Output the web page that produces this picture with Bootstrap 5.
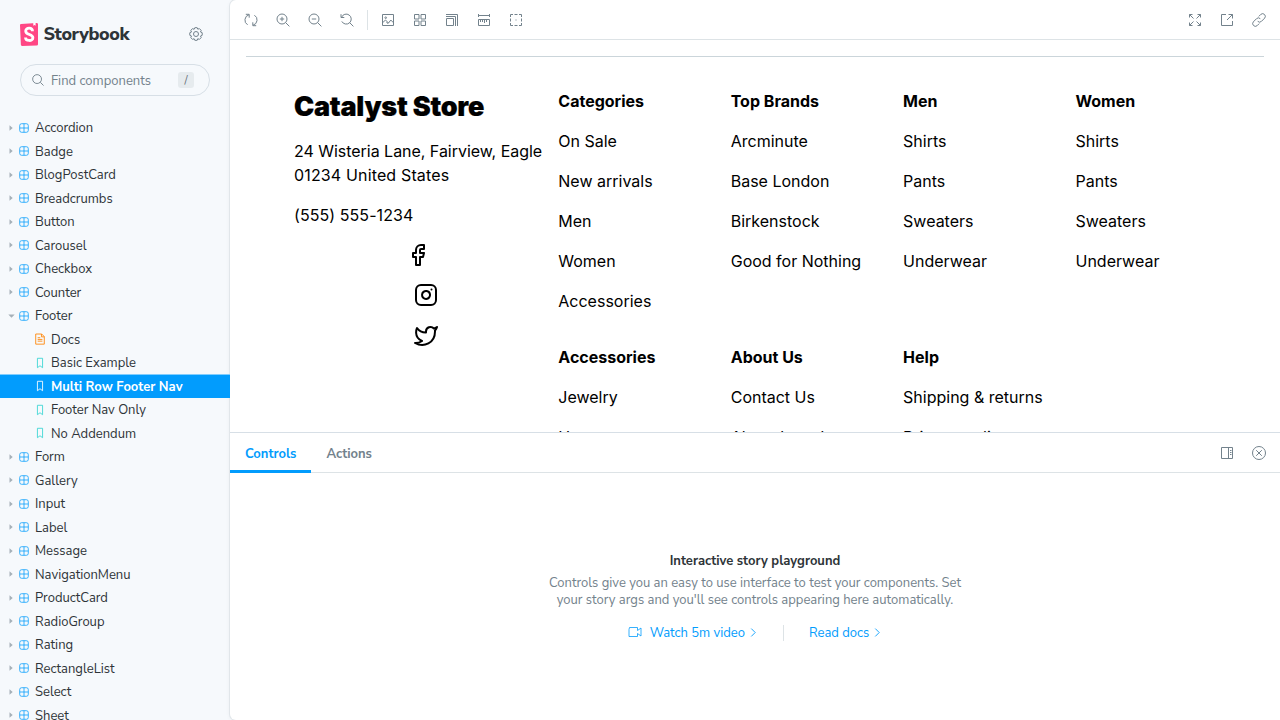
<!DOCTYPE html>
<html lang="en">
<head>
<meta charset="utf-8">
<title>Storybook</title>
<meta name="viewport" content="width=device-width, initial-scale=1">
<link href="https://cdn.jsdelivr.net/npm/bootstrap@5.3.0/dist/css/bootstrap.min.css" rel="stylesheet">
<style>
body{height:720px;background:#f6f9fc;color:#2e3438;font-family:"Nunito Sans","Open Sans",sans-serif;font-size:13px;line-height:18px;overflow:hidden}
svg{display:block;fill:none;stroke:currentColor;flex:none}
.side{width:230px;flex:none}
.brand{height:28px;margin:20px 20px 0}
.logo{stroke:none}
.brand-name{font-size:18px;font-weight:800;letter-spacing:-.36px;margin-left:4.500px}
.gear{color:#73828c;margin-right:7px}
.search{height:32px;margin:16px 20px 20px;border:1px solid #d7dfe6;border-radius:16px;color:#73828c;padding:0 15px 0 11px}
.search-text{margin-left:7px;padding-top:2px}
.key{width:16px;height:16px;border-radius:3px;background:#e6ebee;color:#5c6870;font-size:11px;line-height:17px}
.tree-row{height:23.5px;padding-left:7px;line-height:23.5px;white-space:nowrap}
.tree-row .arrow{width:8px;display:flex;justify-content:center;color:#a5b0b8;margin-right:3px}
.tree-row .kind{width:12px;height:12px;color:#029cfd;margin-right:5px}
.tree-row .label{padding-top:1px;height:23.5px}
.tree-row.leaf{padding-left:34px}
.tree-row.leaf .kind{color:#37d5d3}
.tree-row.leaf .doc{color:#ff8300}
.tree-row.on{background:#029cfd;box-shadow:0 -1px 0 #81cdfd;color:#fff;font-weight:700;position:relative;z-index:1}
.tree-row.on .kind{color:#fff}
.main{background:#fff;border-radius:6px 0 0 6px;box-shadow:0 0 0 1px #e1e6ea,0 1px 5px rgba(0,0,0,.06);color:#73828c;min-width:0}
.bar{height:40px;flex:none;border-bottom:1px solid #dde3e6;padding:0 14px;gap:18px}
.sep{width:1px;height:20px;background:#dde3e6;margin:0 -5px 0 -5px}
.canvas{height:392px;flex:none;overflow:hidden;color:#000;font:400 16px/24px Inter,sans-serif;padding:16px 16px 0}
.store{border-top:1px solid #cbd5da;padding:32px 0 0 48px;grid-template-columns:264.3px repeat(4,172.4px);display:grid;white-space:nowrap}
.store h1{font-size:27px;line-height:32px;font-weight:900;letter-spacing:-.25px;margin:2px 0 16px;-webkit-text-stroke:.2px #000}
.street{letter-spacing:-.03px}
.city{letter-spacing:.15px}
.phone{letter-spacing:.07px}
.social{width:248px;gap:16px}
.social svg{stroke-width:2;stroke-linecap:round;stroke-linejoin:round}
.social .nudge{margin-left:16px}
.social .nudge:last-child{margin-top:.6px}
.links{display:grid;grid-template-columns:repeat(4,172.4px);grid-column:2/6;row-gap:32px}
.links div>*{display:block;margin-bottom:16px}
.links div>*:last-child{margin-bottom:0}
.tabs{height:41px;border-top:1px solid #d7dfe6;border-bottom:1px solid #dde3e6;flex:none;padding-right:14px;gap:0}
.tab-item{height:40px;line-height:42px;padding:0 15px;font-weight:700;border-bottom:3px solid transparent}
.tab-item.on{color:#029cfd;border-color:#029cfd}
.close-panel{margin-left:18px}
.empty{padding-top:79px;line-height:17.3px}
.empty h2{font-size:13px;line-height:18px;font-weight:700;color:#2e3438;margin:0 0 5px}
.act{color:#029cfd;height:16px;margin-top:15px}
.act .txt{padding-top:1.400px}
.act svg{stroke-width:.8}
.act .go{margin:0 0 0 4px}
.act-sep{width:1px;height:16px;background:#dde3e6;margin:0 25px}
</style>
</head>
<body class="d-flex">
<svg width="0" height="0" class="position-absolute">
<symbol id="component" viewBox="0 0 14 14"><g stroke-width=".9"><rect x="2" y="2" width="10" height="10" rx="2.200"/><path d="M7 2v10M2 7h10"/></g></symbol>
<symbol id="story" viewBox="0 0 14 14"><path d="M4 1.500h6v11L7 10.200l-3 2.300z"/></symbol>
<symbol id="doc" viewBox="0 0 14 14"><path d="M2 1.200h7l3 3v8.800h-10zM8.700 1.200v3.300h3.300M4.300 5.500h3M4.300 7.500h5.500M4.300 9.500h5.500"/></symbol>
<symbol id="chev" viewBox="0 0 8 8"><path d="M2 .5 5.500 4 2 7.500"/></symbol>
</svg>
<aside class="side">
 <div class="brand d-flex align-items-center">
  <svg class="logo" width="19" height="23" viewBox="0 0 19 23"><path fill="#ff4785" d="M.9 22.100 0 2.200Q0 1.200 1 1.100L16.600 0q1.400 0 1.400 1.300v20q0 1.200-1.300 1.200L2 22.900q-1 0-1.100-.8z"/><path fill="#fff" d="M13.300 0 15.600 0v2.800l-1.100-.8-1.200.8z"/><path stroke="#fff" stroke-width="2.800" d="M12.500 8.300c0-4.200-6.800-4-6.800-.4 0 4.500 7.200 2.700 7.200 6.800 0 4-7.400 3.500-7.400-.3"/></svg>
  <span class="brand-name">Storybook</span>
  <svg class="gear ms-auto" width="14" height="14" viewBox="0 0 14 14"><circle cx="7" cy="7" r="2.500"/><path d="M5.800.7h2.400l.6 1.500 1.600-.6 1.800 1.800-.7 1.600 1.700.7v2.600l-1.700.7.7 1.600-1.800 1.800-1.600-.7-.6 1.600H5.800l-.7-1.600-1.600.7-1.700-1.800.7-1.600L.8 8.300V5.700L2.500 5l-.7-1.600 1.700-1.800 1.600.7z" stroke-linejoin="round"/></svg>
 </div>
 <div class="search d-flex align-items-center"><svg width="12" height="12" viewBox="0 0 13 13"><circle cx="5.500" cy="5.500" r="4.800"/><path d="m9 9 3.500 3.500"/></svg><span class="search-text">Find components</span><span class="key ms-auto text-center">/</span></div>
 <nav id="tree"></nav>
</aside>
<main class="main flex-grow-1 d-flex flex-column">
 <div class="bar d-flex align-items-center">
  <svg width="14" height="14" viewBox="0 0 14 14"><path d="M4.900 1.800A5.500 5.500 0 0 0 3.600 11.800M1.800 1.300h3.400v3.400M9.100 12.200A5.500 5.500 0 0 0 10.400 2.200M12.200 12.700H8.800V9.300"/></svg>
  <svg width="14" height="14" viewBox="0 0 14 14"><circle cx="6" cy="6" r="5"/><path d="m9.600 9.600 3.800 3.800M6 3.800v4.400M3.800 6h4.400"/></svg>
  <svg width="14" height="14" viewBox="0 0 14 14"><circle cx="6" cy="6" r="5"/><path d="m9.600 9.600 3.800 3.800M3.800 6h4.400"/></svg>
  <svg width="14" height="14" viewBox="0 0 14 14"><path d="M1.600 4.200a5 5 0 1 1 .2 4.200M1 1.200v3.300h3.300M9.600 9.600l3.800 3.800"/></svg>
  <span class="sep"></span>
  <svg width="14" height="14" viewBox="0 0 14 14"><path d="M1.500 1.500h11v11h-11zM1.800 9.500 4.500 7l3 3 2.300-3 2.700 2.800M5.500 9l1.800 2"/><circle cx="4.700" cy="4.700" r=".8"/></svg>
  <svg width="14" height="14" viewBox="0 0 14 14"><path d="M1.500 1.500h4.500v4.500h-4.500zM8 1.500h4.500v4.500h-4.500zM1.500 8h4.500v4.500h-4.500zM8 8h4.500v4.500h-4.500z"/></svg>
  <svg width="14" height="14" viewBox="0 0 14 14"><path d="M1.500 5.500h7v7h-7zM1 3.500h9.500V13M1 1.500h11.500V13"/></svg>
  <svg width="14" height="14" viewBox="0 0 14 14"><path d="M1.500 1v3M12.500 1v3M1.500 2.500h11M1.500 6.500h11v6h-11zM3.500 7v2M5.500 7v2M7.500 7v3M9.500 7v2"/></svg>
  <svg width="14" height="14" viewBox="0 0 14 14"><path d="M1.500 4V1.500H4M10 1.500h2.500V4M12.500 10v2.500H10M4 12.500H1.500V10M5.500 1.500h3M5.500 12.500h3M1.500 5.500v3M12.500 5.500v3M6.500 7h1"/></svg>
  <svg class="ms-auto" width="14" height="14" viewBox="0 0 14 14"><path d="M1.500 4.500v-3h3M9.500 1.500h3v3M12.500 9.500v3h-3M4.500 12.500h-3v-3M1.500 1.500 5.500 5.500M12.500 1.500l-4 4M12.500 12.500l-4-4M1.500 12.500l4-4"/></svg>
  <svg width="14" height="14" viewBox="0 0 14 14"><path d="M6 1.500H1.500v11h11V8M8.500 1.500h4v4M12.500 1.500 7 7"/></svg>
  <svg width="14" height="14" viewBox="0 0 14 14"><path d="M6.800 3.400 8.900 1.300a2.700 2.700 0 0 1 3.800 3.800L9.500 8.300a2.700 2.700 0 0 1-3.800 0M7.200 10.600l-2.100 2.100a2.700 2.700 0 0 1-3.800-3.800l3.200-3.200a2.700 2.700 0 0 1 3.800 0"/></svg>
 </div>
 <section class="canvas"><div class="store">
  <div><h1>Catalyst Store</h1><div class="street">24 Wisteria Lane, Fairview, Eagle</div><div class="city">01234 United States</div><div class="phone mt-3">(555) 555-1234</div>
   <div class="social d-flex flex-column align-items-center mt-3">
    <svg width="24" height="24" viewBox="0 0 24 24"><path d="M18 2h-3a5 5 0 0 0-5 5v3H7v4h3v8h4v-8h3l1-4h-4V7a1 1 0 0 1 1-1h3z"/></svg>
    <svg class="nudge" width="24" height="24" viewBox="0 0 24 24"><rect x="2" y="2" width="20" height="20" rx="5"/><path d="M16 11.370A4 4 0 1 1 12.630 8 4 4 0 0 1 16 11.370zM17.500 6.500h.01"/></svg>
    <svg class="nudge" width="24" height="24" viewBox="0 0 24 24"><path d="M23 3a10.900 10.900 0 0 1-3.140 1.530 4.480 4.480 0 0 0-7.860 3v1A10.660 10.660 0 0 1 3 4s-4 9 5 13a11.640 11.640 0 0 1-7 2c9 5 20 0 20-11.500a4.500 4.500 0 0 0-.08-.83A7.720 7.720 0 0 0 23 3z"/></svg>
   </div></div>
  <div class="links">
   <div><b>Categories</b><span>On Sale</span><span>New arrivals</span><span>Men</span><span>Women</span><span>Accessories</span></div>
   <div><b>Top Brands</b><span>Arcminute</span><span>Base London</span><span>Birkenstock</span><span>Good for Nothing</span></div>
   <div><b>Men</b><span>Shirts</span><span>Pants</span><span>Sweaters</span><span>Underwear</span></div>
   <div><b>Women</b><span>Shirts</span><span>Pants</span><span>Sweaters</span><span>Underwear</span></div>
   <div><b>Accessories</b><span>Jewelry</span><span>Homeware</span></div>
   <div><b>About Us</b><span>Contact Us</span><span>About brand</span></div>
   <div><b>Help</b><span>Shipping &amp; returns</span><span>Privacy policy</span></div>
  </div>
 </div></section>
 <div class="tabs d-flex align-items-center">
  <span class="tab-item on">Controls</span><span class="tab-item">Actions</span>
  <svg class="ms-auto" width="14" height="14" viewBox="0 0 14 14"><path d="M1.500 1.500h11v11h-11zM8.500 1.500v11M10 4.500h1.500M10 6.500h1.500M10 8.500h1.500"/></svg>
  <svg class="close-panel" width="14" height="14" viewBox="0 0 14 14"><circle cx="7" cy="7" r="6.500"/><path d="m4.200 4.200 5.600 5.600M9.800 4.200 4.200 9.800"/></svg>
 </div>
 <section class="empty text-center">
  <h2>Interactive story playground</h2>
  <div>Controls give you an easy to use interface to test your components. Set<br>your story args and you'll see controls appearing here automatically.</div>
  <div class="act d-flex justify-content-center align-items-center"><svg width="14" height="14" viewBox="0 0 14 14"><path d="M1.500 1.500h8v3l3.500-2.500v8l-3.500-2.500v3h-8.500V3.500z"/></svg><span class="txt ms-2">Watch 5m video</span><svg class="go" width="9" height="9"><use href="#chev"/></svg><span class="act-sep"></span><span class="txt">Read docs</span><svg class="go" width="9" height="9"><use href="#chev"/></svg></div>
 </section>
</main>
<script src="https://cdn.jsdelivr.net/npm/bootstrap@5.3.0/dist/js/bootstrap.bundle.min.js"></script>
<script>
const closed='<svg width="4" height="6" viewBox="0 0 4 6"><path fill="currentColor" stroke="none" d="M.5.300 3.700 3 .5 5.700z"/></svg>';
const open='<svg width="7" height="4" viewBox="0 0 7 4"><path fill="currentColor" stroke="none" d="M.3.500h6.400L3.500 3.700z"/></svg>';
const icon=(n,c='')=>`<svg class="kind ${c}" width="12" height="12"><use href="#${n}"/></svg>`;
const names='Accordion,Badge,BlogPostCard,Breadcrumbs,Button,Carousel,Checkbox,Counter,Footer,Form,Gallery,Input,Label,Message,NavigationMenu,ProductCard,RadioGroup,Rating,RectangleList,Select,Sheet'.split(',');
const stories=['Docs','Basic Example','Multi Row Footer Nav','Footer Nav Only','No Addendum'];
document.getElementById('tree').innerHTML=names.map(n=>
 `<div class="tree-row d-flex align-items-center"><span class="arrow">${n==='Footer'?open:closed}</span>${icon('component')}<span class="label">${n}</span></div>`+
 (n==='Footer'?stories.map((s,i)=>`<div class="tree-row leaf d-flex align-items-center ${i===2?'on':''}">${i?icon('story'):icon('doc','doc')}<span class="label">${s}</span></div>`).join(''):'')).join('');
</script>
</body>
</html>
